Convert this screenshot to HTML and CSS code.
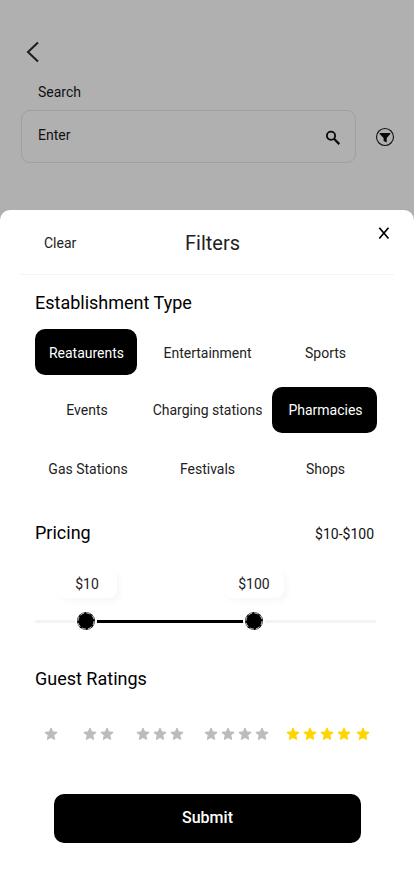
FILE: index.html
```html
<!DOCTYPE html>
<html lang="en">
<head>
<meta charset="utf-8">
<title>Filters</title>
<link rel="stylesheet" href="styles.css">
</head>
<body>
<svg width="0" height="0" class="defs"><symbol id="star" viewBox="0 0 14 14"><path d="M7 1.3 8.5 5 12.7 5.4 9.6 8.1 10.5 12.2 7 10.1 3.5 12.2 4.4 8.1 1.3 5.4 5.5 5Z" fill="currentColor" stroke="currentColor" stroke-width="1.3" stroke-linejoin="round"/></symbol></svg>
<div class="screen">
  <header class="search">
    <svg class="back" width="14" height="22" viewBox="0 0 14 22"><path d="M12 1.5 2 11 12 20.5" fill="none" stroke="#1c1c1c" stroke-width="2"/></svg>
    <div class="label"><span>Search</span></div>
    <div class="search-row">
      <div class="field"><span>Enter</span>
        <svg width="16" height="16" viewBox="0 0 16 16" fill="none" stroke="#080808"><circle cx="6" cy="5.7" r="4.1" stroke-width="1.8"/><path d="m9 8.8 5.3 5.3" stroke-width="2.2"/></svg>
      </div>
      <svg class="funnel" width="20" height="20" viewBox="0 0 20 20"><circle cx="10" cy="10" r="8.5" fill="none" stroke="#111" stroke-width="1.1"/><path d="M4.7 6h10.6v1L11.7 11v4.6L8.6 14v-3L4.7 7Z" fill="#080808"/></svg>
    </div>
  </header>
  <main class="sheet">
    <div class="top">
      <span class="clear">Clear</span>
      <h1>Filters</h1>
      <svg class="close" width="12" height="14" viewBox="0 0 12 14"><path d="m1.3 1.7 9.2 10.8M10.5 1.7 1.3 12.5" fill="none" stroke="#000" stroke-width="1.7"/></svg>
    </div>
    <h2 class="type-title"><span>Establishment Type</span></h2>
    <div class="types">
      <div class="on"><span>Reataurents</span></div><div><span>Entertainment</span></div><div><span>Sports</span></div>
      <div><span>Events</span></div><div><span>Charging stations</span></div><div class="on"><span>Pharmacies</span></div>
      <div><span>Gas Stations</span></div><div><span>Festivals</span></div><div><span>Shops</span></div>
    </div>
    <div class="pricing"><h2><span>Pricing</span></h2><span class="range-text">$10-$100</span></div>
    <div class="slider">
      <div class="track"><div class="fill"></div></div>
      <div class="handle low"><div class="tip"><span>$10</span></div><svg width="24" height="24" viewBox="0 0 24 24"><circle cx="12" cy="12" r="11" fill="#fff"/><circle cx="12" cy="12" r="9" fill="#000"/><circle cx="12" cy="12" r="8.1" fill="none" stroke="#fff" stroke-width=".8" stroke-dasharray="4.2 2.16"/></svg></div>
      <div class="handle high"><div class="tip"><span>$100</span></div><svg width="24" height="24" viewBox="0 0 24 24"><circle cx="12" cy="12" r="11" fill="#fff"/><circle cx="12" cy="12" r="9" fill="#000"/><circle cx="12" cy="12" r="8.1" fill="none" stroke="#fff" stroke-width=".8" stroke-dasharray="4.2 2.16"/></svg></div>
    </div>
    <h2 class="rating-title"><span>Guest Ratings</span></h2>
    <div class="ratings">
      <div><svg><use href="#star"/></svg></div>
      <div><svg><use href="#star"/></svg><svg><use href="#star"/></svg></div>
      <div><svg><use href="#star"/></svg><svg><use href="#star"/></svg><svg><use href="#star"/></svg></div>
      <div><svg><use href="#star"/></svg><svg><use href="#star"/></svg><svg><use href="#star"/></svg><svg><use href="#star"/></svg></div>
      <div class="gold"><svg><use href="#star"/></svg><svg><use href="#star"/></svg><svg><use href="#star"/></svg><svg><use href="#star"/></svg><svg><use href="#star"/></svg></div>
    </div>
    <button class="submit">Submit</button>
  </main>
</div>
</body>
</html>
```
FILE: styles.css
```css
* { box-sizing: border-box; }
body { margin: 0; background: #fff; font: 14px/20px Roboto, sans-serif; color: #222; overflow: hidden; }
h1, h2 { margin: 0; font-weight: 400; color: #000; }
svg { display: block; flex: none; }
.defs { position: absolute; }
.screen { width: 414px; height: 895px; background: #b0b0b0; }
.search { height: 210px; padding: 41px 19px 0 21px; color: #111; }
.back { margin-left: 5px; }
.label { margin: 19px 0 8px 17px; }
.search-row { display: flex; align-items: center; gap: 19px; }
.field { width: 335px; height: 53px; display: flex; justify-content: space-between; align-items: center; padding: 0 14px 3px 16px; border: 1px solid #9f9f9f; border-radius: 9px; }
.field svg { margin: 5px 0 0; }
.sheet { height: 685px; background: #fff; border-radius: 10px 10px 0 0; }
.top { height: 65px; margin: 0 20px; display: grid; grid-template-columns: 1fr auto 1fr; align-items: center; border-bottom: 1px solid #f4f4f4; padding-top: 2px; }
.clear { padding-left: 24px; }
.top h1 { font-size: 20px; line-height: 24px; color: #222; margin-left: 11px; }
.close { justify-self: end; margin: -21px 4px 0 0; }
h2 { font-size: 18px; line-height: 24px; }
.type-title { margin: 16px 35px 14px; }
.types { margin-left: 35px; width: 342px; display: grid; grid-template-columns: 102px 135px 105px; grid-template-rows: 46px 46px 46px; row-gap: 12px; }
.types div { display: flex; align-items: center; justify-content: center; padding: 1px 0 0 2px; border-radius: 10px; white-space: nowrap; }
.types div:nth-child(n + 4):nth-child(-n + 6) { padding-top: 0; padding-bottom: 1px; }
.types div:nth-child(3n + 2) { padding-left: 6px; }
.types div:first-child { padding-left: 1px; }
.types div:nth-child(7) { padding-left: 4px; }
.types .on { background: #000; color: #fff; }
.pricing { margin: 30px 40px 0 35px; display: flex; justify-content: space-between; align-items: center; }
.range-text { color: #111; padding-top: 1px; }
.slider { position: relative; height: 90px; margin: 0 38px 0 35px; padding-top: 75px; }
.track { height: 3px; background: #f3f3f3; border-radius: 2px; }
.fill { height: 3px; margin-left: 51px; width: 168px; background: #000; }
.handle { position: absolute; top: 25px; width: 60px; display: flex; flex-direction: column; align-items: center; gap: 11px; }
.low { left: 21px; }
.high { left: 189px; }
.tip { width: 60px; height: 28px; display: flex; align-items: center; justify-content: center; border-radius: 8px; background: #fff; box-shadow: 3px 3px 6px rgba(0,0,0,.035); }
.low .tip { margin-left: 1px; }
.low .tip span { padding-left: 1px; }
.rating-title { margin: 32px 35px 0; }
.ratings { display: flex; margin: 36px 0 0 44px; height: 14px; color: #bcbcbc; }
.ratings div { display: flex; gap: 3px; }
.ratings div:nth-child(2) { margin-left: 24.5px; }
.ratings div:nth-child(3) { margin-left: 22.5px; }
.ratings div:nth-child(4) { margin-left: 20px; }
.ratings svg { width: 14px; height: 14px; }
.ratings .gold { color: #ffd500; margin-left: 17px; }
.gold svg:last-child { margin-left: 2px; }
.submit { display: block; width: 307px; height: 49px; margin: 53px 0 0 54px; padding: 0 0 2px; border: 0; border-radius: 10px; background: #000; color: #fff; font: 500 16px/20px Roboto, sans-serif; }
```
